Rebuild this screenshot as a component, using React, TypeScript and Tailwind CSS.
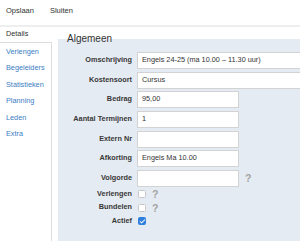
import { Check } from 'lucide-react'

const navItems = ['Verlengen', 'Begeleiders', 'Statistieken', 'Planning', 'Leden', 'Extra']

type Field = { label: string; value?: string; wide?: boolean; help?: boolean }

const fields: Field[] = [
  { label: 'Omschrijving', value: 'Engels 24-25 (ma 10.00 – 11.30 uur)', wide: true },
  { label: 'Kostensoort', value: 'Cursus', wide: true },
  { label: 'Bedrag', value: '95,00' },
  { label: 'Aantal Termijnen', value: '1' },
  { label: 'Extern Nr', value: '' },
  { label: 'Afkorting', value: 'Engels Ma 10.00' },
  { label: 'Volgorde', value: '', help: true },
]

const checks = [
  { label: 'Verlengen', checked: false, help: true },
  { label: 'Bundelen', checked: false, help: true },
  { label: 'Actief', checked: true, help: false },
]

function Help() {
  return <span className="ml-[6px] text-[10.5px] font-bold leading-none text-[#a3a3a3]">?</span>
}

export default function App() {
  return (
    <div className="w-[300px] h-[241px] overflow-hidden bg-white text-[#333] font-['Liberation_Sans',Arial,sans-serif]">
      {/* toolbar */}
      <div className="h-[27px] flex items-center gap-[16px] px-[6px] pb-[3px] text-[7.5px] border-b-2 border-[#eeeeee]">
        <span>Opslaan</span>
        <span>Sluiten</span>
      </div>

      <div className="flex h-[214px]">
        {/* tabs */}
        <div className="w-[52px] shrink-0 flex flex-col text-[7.3px]">
          <div className="h-[16px] pl-[6px] flex items-center border-b border-[#dddddd]">Details</div>
          <div className="flex-1 border-r border-[#dddddd] pt-[1px]">
            {navItems.map((item) => (
              <div key={item} className="h-[16.5px] pl-[6px] flex items-center text-[#3b7dc4]">
                {item}
              </div>
            ))}
          </div>
        </div>

        {/* form */}
        <div className="flex-1 pl-[6px] pt-[6px]">
          <fieldset className="h-full border-0 bg-[#e5ebf2] min-w-0">
            <legend className="ml-[9px] text-[10px] leading-[12px] text-[#333]">Algemeen</legend>
            <div className="pt-[7px] flex flex-col gap-[2.7px]">
              {fields.map((f) => (
                <div key={f.label} className="flex items-center h-[17px]">
                  <div className="w-[79px] pr-[5px] text-right text-[7.3px] font-bold text-[#383838] whitespace-nowrap">{f.label}</div>
                  <div
                    className={`h-full flex items-center pl-[4px] bg-white border border-[#d3d3d3] text-[7.3px] whitespace-nowrap ${
                      f.wide ? 'w-[180px]' : 'w-[102px]'
                    }`}
                  >
                    {f.value}
                  </div>
                  {f.help && <Help />}
                </div>
              ))}
            </div>
            <div className="mt-[0.5px] flex flex-col">
              {checks.map((c) => (
                <div key={c.label} className="flex items-center h-[13.5px]">
                  <div className="w-[79px] pr-[5px] text-right text-[7.3px] font-bold text-[#383838]">{c.label}</div>
                  <div className="ml-[1px]">
                    {c.checked ? (
                      <div className="w-[8px] h-[8px] rounded-[2px] bg-[#2f7fdc] flex items-center justify-center">
                        <Check className="w-[7px] h-[7px] text-white" strokeWidth={3.5} />
                      </div>
                    ) : (
                      <div className="w-[8px] h-[8px] rounded-[1.5px] bg-white border border-[#c8c8c8]" />
                    )}
                  </div>
                  {c.help && <Help />}
                </div>
              ))}
            </div>
          </fieldset>
        </div>
      </div>
    </div>
  )
}
